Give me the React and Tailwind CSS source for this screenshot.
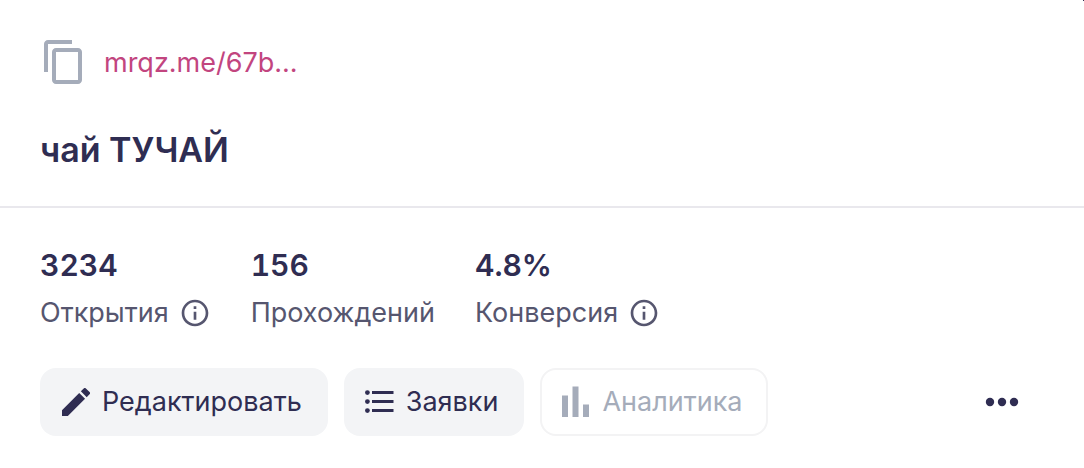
import { MdContentCopy, MdInfoOutline } from 'react-icons/md';

const stats = [
  { value: '3234', label: 'Открытия', info: true },
  { value: '156', label: 'Прохождений' },
  { value: '4.8%', label: 'Конверсия', info: true },
];

function PencilIcon() {
  return (
    <svg viewBox="3 3 18 18" className="size-7" fill="currentColor" aria-hidden="true">
      <path d="M3 17.25V21h3.75L17.81 9.94l-3.75-3.75L3 17.25zM20.71 7.04a1 1 0 0 0 0-1.41l-2.34-2.34a1 1 0 0 0-1.41 0l-1.83 1.83 3.75 3.75 1.83-1.83z" />
    </svg>
  );
}

function ListIcon() {
  return (
    <svg viewBox="0 0 30 24" className="h-6 w-[30px]" fill="currentColor" aria-hidden="true">
      <circle cx="3.4" cy="2.6" r="2.4" />
      <circle cx="3.4" cy="11.6" r="2.4" />
      <circle cx="3.4" cy="20.6" r="2.4" />
      <path d="M8 1h21.5v3H8zM8 10h21.5v3H8zM8 19h21.5v3H8z" />
    </svg>
  );
}

function BarsIcon() {
  return (
    <svg viewBox="0 0 28 32" className="h-8 w-7" fill="currentColor" aria-hidden="true">
      <path d="M0 9.5h6V31H0zM10.5 .5h6V31h-6zM21 18.5h6V31h-6z" />
    </svg>
  );
}

function Stat({ value, label, info }) {
  return (
    <div>
      <dd className="text-[30px] leading-10 font-semibold tabular-nums">{value}</dd>
      <dt className="mt-2 flex items-center gap-[10px] text-[27px] leading-10 text-[#56566f]">
        {label}
        {info && (
          <button type="button" aria-label={`О показателе «${label}»`}>
            <MdInfoOutline className="size-8" />
          </button>
        )}
      </dt>
    </div>
  );
}

export default function App() {
  return (
    <article className="relative bg-white pb-8 font-['Inter','Liberation_Sans',sans-serif] text-[#2f2d52]">
      <span className="absolute top-0 right-0 size-px bg-[#2f2d52]" />
      <header className="border-b-2 border-[#e9e8ed] px-10 pt-[38px] pb-8">
        <div className="flex items-center gap-4">
          <button type="button" aria-label="Скопировать ссылку" className="text-[#a5acba]">
            <MdContentCopy className="size-12" />
          </button>
          <a href="#quiz" className="pt-0.5 text-[27px] leading-10 text-[#c2457f]">mrqz.me/67b...</a>
        </div>
        <h2 className="mt-10 text-[34px] leading-12 font-semibold">чай ТУЧАЙ</h2>
      </header>

      <dl className="flex gap-10 px-10 pt-[37px]">
        {stats.map((s) => (
          <Stat key={s.label} {...s} />
        ))}
      </dl>

      <div className="mt-[35px] flex items-center gap-4 px-10">
        <button type="button" className="flex h-[68px] items-center gap-3 rounded-2xl bg-[#f3f4f6] pr-[26px] pl-[22px] text-[27px]">
          <PencilIcon />
          Редактировать
        </button>
        <button type="button" className="flex h-[68px] items-center gap-3 rounded-2xl bg-[#f3f4f6] pr-[26px] pl-5 text-[27px]">
          <ListIcon />
          Заявки
        </button>
        <button type="button" disabled className="flex h-[68px] items-center gap-3 rounded-2xl border-2 border-[#f3f3f4] pr-6 pl-5 text-[27px] text-[#a5acba]">
          <BarsIcon />
          Аналитика
        </button>
        <button type="button" aria-label="Ещё" className="mr-6 ml-auto">
          <svg viewBox="0 0 36 12" className="h-3 w-9" fill="currentColor" aria-hidden="true">
            <circle cx="6" cy="6" r="4.2" />
            <circle cx="18" cy="6" r="4.2" />
            <circle cx="30" cy="6" r="4.2" />
          </svg>
        </button>
      </div>
    </article>
  );
}
